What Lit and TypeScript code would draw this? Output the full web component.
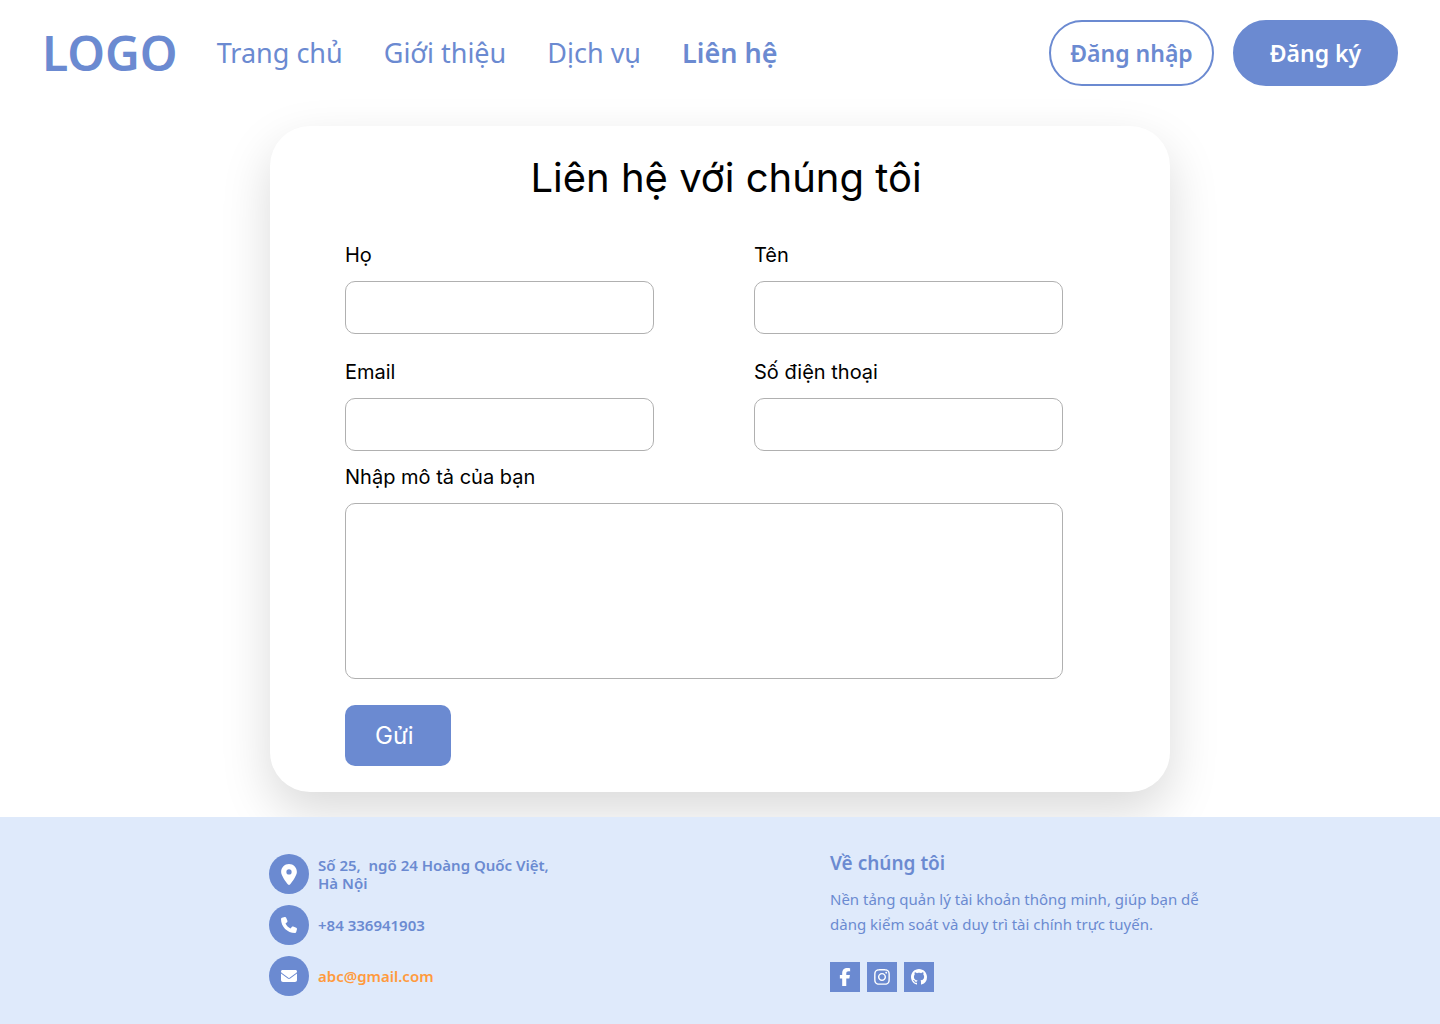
import { LitElement, html, css, svg } from "lit";
import { customElement } from "lit/decorators.js";

const pin = svg`<svg class="icon pin" viewBox="0 0 384 512" aria-hidden="true"><path d="M215.700 499.200C267 435 384 279.400 384 192C384 86 298 0 192 0S0 86 0 192c0 87.400 117 243 168.300 307.200c12.300 15.300 35.100 15.300 47.400 0zM192 128a64 64 0 1 1 0 128 64 64 0 1 1 0-128z"/></svg>`;
const phone = svg`<svg class="icon" viewBox="0 0 512 512" aria-hidden="true"><path d="M164.900 24.600c-7.700-18.600-28-28.500-47.400-23.200l-88 24C12.100 30.200 0 46 0 64C0 311.400 200.600 512 448 512c18 0 33.800-12.100 38.600-29.500l24-88c5.300-19.400-4.600-39.700-23.200-47.400l-96-40c-16.300-6.800-35.200-2.100-46.300 11.600L304.700 368C234.300 334.700 177.300 277.700 144 207.300L193.300 167c13.700-11.200 18.400-30 11.600-46.300l-40-96z"/></svg>`;
const mail = svg`<svg class="icon" viewBox="0 0 512 512" aria-hidden="true"><path d="M48 64C21.500 64 0 85.500 0 112c0 15.100 7.100 29.300 19.200 38.400L236.800 313.600c11.400 8.500 27 8.500 38.400 0L492.800 150.400c12.100-9.100 19.200-23.300 19.200-38.400c0-26.500-21.500-48-48-48H48zM0 176V384c0 35.300 28.700 64 64 64H448c35.300 0 64-28.700 64-64V176L294.400 339.200c-22.800 17.100-54 17.100-76.800 0L0 176z"/></svg>`;
const facebook = svg`<svg class="social-icon tall" viewBox="0 0 320 512" aria-hidden="true"><path d="M80 299.300V512H196V299.300h86.500l18-97.800H196V166.900c0-51.700 20.300-71.500 72.700-71.500c16.300 0 29.400 .4 37 1.200V7.900C291.400 4 256.400 0 236.200 0C129.300 0 80 50.500 80 159.400v42.100H14v97.800H80z"/></svg>`;
const instagram = svg`<svg class="social-icon tall" viewBox="0 0 448 512" aria-hidden="true"><path d="M224.100 141c-63.600 0-114.900 51.300-114.900 114.900s51.300 114.900 114.900 114.900S339 319.500 339 255.900 287.700 141 224.100 141zm0 189.600c-41.100 0-74.700-33.500-74.700-74.700s33.500-74.700 74.700-74.700 74.700 33.500 74.700 74.700-33.600 74.700-74.700 74.700zm146.400-194.300c0 14.900-12 26.800-26.800 26.800-14.900 0-26.800-12-26.800-26.800s12-26.800 26.800-26.800 26.800 12 26.800 26.800zm76.100 27.200c-1.700-35.900-9.900-67.700-36.200-93.900-26.200-26.200-58-34.400-93.900-36.200-37-2.100-147.900-2.100-184.900 0-35.800 1.700-67.600 9.900-93.900 36.100s-34.400 58-36.200 93.900c-2.100 37-2.100 147.900 0 184.900 1.700 35.900 9.900 67.700 36.200 93.900s58 34.400 93.900 36.200c37 2.100 147.900 2.100 184.900 0 35.900-1.700 67.700-9.900 93.900-36.200 26.200-26.200 34.400-58 36.200-93.900 2.100-37 2.100-147.800 0-184.800zM398.800 388c-7.800 19.600-22.900 34.700-42.600 42.600-29.500 11.700-99.500 9-132.100 9s-102.700 2.600-132.100-9c-19.600-7.800-34.700-22.900-42.600-42.600-11.700-29.500-9-99.500-9-132.100s-2.600-102.700 9-132.100c7.800-19.600 22.900-34.700 42.600-42.600 29.500-11.700 99.500-9 132.100-9s102.700-2.600 132.100 9c19.600 7.800 34.700 22.900 42.600 42.600 11.700 29.500 9 99.500 9 132.100s2.700 102.700-9 132.100z"/></svg>`;
const github = svg`<svg class="social-icon" viewBox="0 0 16 16" aria-hidden="true"><path d="M8 0C3.580 0 0 3.580 0 8c0 3.540 2.290 6.530 5.470 7.590.400.070.550-.170.550-.380 0-.190-.010-.820-.010-1.490-2.010.370-2.530-.490-2.690-.940-.090-.230-.480-.940-.820-1.130-.280-.150-.680-.520-.010-.530.630-.010 1.080.580 1.230.820.720 1.210 1.870.870 2.330.660.070-.520.280-.870.510-1.070-1.780-.200-3.640-.890-3.640-3.950 0-.870.310-1.590.820-2.150-.080-.200-.360-1.020.080-2.120 0 0 .670-.210 2.200.820.640-.180 1.320-.270 2-.270s1.360.090 2 .270c1.530-1.040 2.200-.820 2.200-.820.440 1.100.160 1.920.080 2.120.510.560.820 1.270.820 2.150 0 3.070-1.870 3.750-3.650 3.950.290.250.540.730.540 1.480 0 1.070-.010 1.930-.010 2.200 0 .210.150.460.550.380A8.010 8.010 0 0 0 16 8c0-4.420-3.580-8-8-8z"/></svg>`;

@customElement("app-root")
export class AppRoot extends LitElement {
  static styles = css`
    :host {
      --brand: #6b8ad1;
      display: flex;
      flex-direction: column;
      min-height: 100vh;
      background: #fff;
      color: #000;
      font-family: "Noto Sans", "Open Sans", sans-serif;
    }
    * { box-sizing: border-box; }
    a { color: inherit; text-decoration: none; }
    .header {
      display: flex;
      align-items: center;
      padding: 20px 42px;
      color: var(--brand);
    }
    .logo {
      font-size: 48px;
      line-height: 66px;
      font-weight: 600;
    }
    .nav {
      display: flex;
      gap: 41px;
      margin-left: 39px;
      font-size: 27px;
      line-height: 36px;
    }
    .active { font-weight: 600; }
    .account { display: flex; gap: 19px; margin-left: auto; }
    .pill {
      width: 165px;
      height: 66px;
      padding: 0;
      border: 2px solid var(--brand);
      border-radius: 33px;
      background: #fff;
      color: var(--brand);
      font: 600 23px/32px "Noto Sans", "Open Sans", sans-serif;
    }
    .filled { background: var(--brand); color: #fff; }
    .main { padding: 20px 20px 25px; }
    .card {
      max-width: 900px;
      margin: 0 auto;
      padding: 28px 107px 26px 75px;
      border-radius: 40px;
      background: #fff;
      box-shadow: 0 20px 50px rgba(0, 0, 0, 0.15);
      font-family: Inter, sans-serif;
    }
    .title {
      margin: 0 0 41px;
      padding-left: 44px;
      font-size: 40px;
      line-height: 48px;
      font-weight: 400;
      text-align: center;
    }
    .fields {
      display: grid;
      grid-template-columns: 1fr 1fr;
      gap: 26px 100px;
    }
    .field {
      display: flex;
      flex-direction: column;
      gap: 14px;
      font-size: 20px;
      line-height: 24px;
    }
    .message { margin: 14px 0 26px; }
    .box {
      width: 100%;
      height: 53px;
      padding: 12px;
      border: 1px solid #b0b0b0;
      border-radius: 10px;
      background: #fff;
      font: inherit;
      resize: none;
    }
    .area { height: 176px; }
    .send {
      display: block;
      padding: 16px 37px 15px 30px;
      border: 0;
      border-radius: 10px;
      background: var(--brand);
      color: #fff;
      font: 400 24px/30px Inter, sans-serif;
    }
    .footer {
      flex: 1;
      position: relative;
      padding: 32px 20px;
      background: #dfeafb;
      color: var(--brand);
    }
    .columns {
      display: grid;
      grid-template-columns: 1fr 381px;
      max-width: 982px;
      margin: 0 auto;
      padding-left: 40px;
    }
    .contacts {
      display: flex;
      flex-direction: column;
      gap: 11px;
      margin: 0;
      padding: 5px 0 0;
      list-style: none;
      font-size: 15px;
      line-height: 18px;
      font-weight: 600;
    }
    .contact { display: flex; align-items: center; gap: 9px; }
    .badge {
      display: grid;
      place-items: center;
      width: 40px;
      height: 40px;
      border-radius: 50%;
      background: var(--brand);
    }
    .icon { width: 16px; height: 16px; fill: #fff; }
    .pin { height: 21px; }
    .mail { color: #ff9a3d; }
    .about-title {
      margin: 0 0 10px;
      font-size: 19px;
      line-height: 28px;
      font-weight: 600;
    }
    .about-text {
      margin: 0 0 25px;
      font-size: 15px;
      line-height: 25px;
    }
    .socials { display: flex; gap: 7px; }
    .social {
      display: grid;
      place-items: center;
      width: 30px;
      height: 30px;
      background: var(--brand);
    }
    .social-icon { height: 16px; width: 16px; fill: #fff; }
    .tall { height: 18px; }
  `;

  render() {
    return html`
      <header class="header">
        <a class="logo" href="#">LOGO</a>
        <nav class="nav">
          <a href="#">Trang chủ</a>
          <a href="#">Giới thiệu</a>
          <a href="#">Dịch vụ</a>
          <a class="active" href="#" aria-current="page">Liên hệ</a>
        </nav>
        <div class="account">
          <button class="pill" type="button">Đăng nhập</button>
          <button class="pill filled" type="button">Đăng ký</button>
        </div>
      </header>
      <main class="main">
        <form class="card">
          <h1 class="title">Liên hệ với chúng tôi</h1>
          <div class="fields">
            <div class="field"><label for="last">Họ</label><input class="box" id="last" type="text" /></div>
            <div class="field"><label for="first">Tên</label><input class="box" id="first" type="text" /></div>
            <div class="field"><label for="email">Email</label><input class="box" id="email" type="email" /></div>
            <div class="field"><label for="phone">Số điện thoại</label><input class="box" id="phone" type="tel" /></div>
          </div>
          <div class="field message">
            <label for="message">Nhập mô tả của bạn</label>
            <textarea class="box area" id="message"></textarea>
          </div>
          <button class="send" type="button">Gửi</button>
        </form>
      </main>
      <footer class="footer">
        <div class="columns">
          <ul class="contacts">
            <li class="contact"><span class="badge">${pin}</span><span>Số 25,&nbsp; ngõ 24 Hoàng Quốc Việt,<br />Hà Nội</span></li>
            <li class="contact"><span class="badge">${phone}</span><a href="tel:+84336941903">+84 336941903</a></li>
            <li class="contact"><span class="badge">${mail}</span><a class="mail" href="mailto:abc@gmail.com">abc@gmail.com</a></li>
          </ul>
          <section>
            <h2 class="about-title">Về chúng tôi</h2>
            <p class="about-text">Nền tảng quản lý tài khoản thông minh, giúp bạn dễ<br />dàng kiểm soát và duy trì tài chính trực tuyến.</p>
            <div class="socials">
              <a class="social" href="#" aria-label="Facebook">${facebook}</a>
              <a class="social" href="#" aria-label="Instagram">${instagram}</a>
              <a class="social" href="#" aria-label="GitHub">${github}</a>
            </div>
          </section>
        </div>
      </footer>
    `;
  }
}
